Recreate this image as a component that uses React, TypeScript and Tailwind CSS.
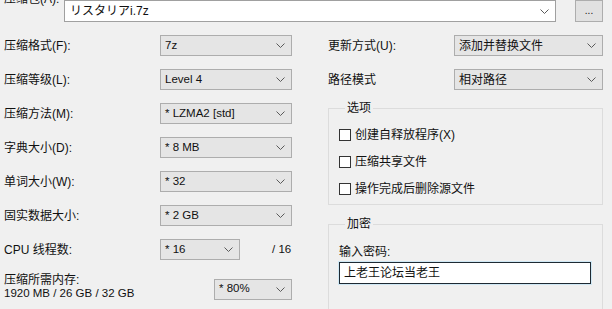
import React from "react";

function Chevron() {
  return (
    <svg width="9" height="5" viewBox="0 0 9 5" className="shrink-0">
      <path d="M0.5 0.5 L4.5 4.5 L8.5 0.5" fill="none" stroke="#5a5a5a" strokeWidth="1" />
    </svg>
  );
}

function Combo({ value, className = "" }: { value: string; className?: string }) {
  return (
    <div
      className={`flex h-[21px] items-center justify-between border border-[#adadad] bg-[#e5e5e5] pl-[4px] pr-[6px] text-[11.5px] ${className}`}
    >
      <span className="whitespace-nowrap">{value}</span>
      <Chevron />
    </div>
  );
}

function Row({ label, value }: { label: string; value: string }) {
  return (
    <div className="flex h-[21px] items-center">
      <span className="w-[156px] whitespace-nowrap">{label}</span>
      <Combo value={value} className="w-[132px]" />
    </div>
  );
}

function Check({ label }: { label: string }) {
  return (
    <div className="flex h-[16px] items-center gap-[4px]">
      <span className="h-[12px] w-[12px] border border-[#333333] bg-white" />
      <span className="whitespace-nowrap">{label}</span>
    </div>
  );
}

export default function App() {
  return (
    <div className="h-[309px] w-[612px] overflow-hidden bg-[#f0f0f0] text-[12px] leading-none text-[#111] font-['Liberation_Sans','Noto_Sans_CJK_SC',sans-serif]">
      {/* archive name */}
      <div className="flex items-start pl-[4px]">
        <span className="-mt-[7px] w-[60px] whitespace-nowrap">压缩包(A):</span>
        <div className="flex h-[22px] w-[492px] items-center justify-between border border-[#a0a0a0] bg-white pl-[5px] pr-[6px]">
          <span>リスタリアi.7z</span>
          <Chevron />
        </div>
        <div className="ml-[19px] flex h-[22px] w-[28px] items-end justify-center border border-[#adadad] bg-[#e1e1e1] pb-[5px] text-[10px]">
          ...
        </div>
      </div>

      <div className="mt-[13px] flex">
        {/* left column */}
        <div className="flex w-[328px] flex-col pl-[4px]">
          <div className="flex flex-col gap-[13px]">
            <Row label="压缩格式(F):" value="7z" />
            <Row label="压缩等级(L):" value="Level 4" />
            <Row label="压缩方法(M):" value="* LZMA2 [std]" />
            <Row label="字典大小(D):" value="* 8 MB" />
            <Row label="单词大小(W):" value="* 32" />
            <Row label="固实数据大小:" value="* 2 GB" />
            <div className="flex h-[21px] items-center">
              <span className="w-[156px] whitespace-nowrap">CPU 线程数:</span>
              <Combo value="* 16" className="w-[80px]" />
              <span className="ml-[32px] text-[11.5px]">/ 16</span>
            </div>
          </div>
          <div className="mt-[14px] flex items-end">
            <div className="flex w-[210px] flex-col gap-[2px]">
              <span className="whitespace-nowrap">压缩所需内存:</span>
              <span className="whitespace-nowrap text-[11.5px]">1920 MB / 26 GB / 32 GB</span>
            </div>
            <Combo value="* 80%" className="w-[78px]" />
          </div>
        </div>

        {/* right column */}
        <div className="flex w-[275px] flex-col">
          <div className="flex flex-col gap-[13px]">
            <div className="flex h-[21px] items-center">
              <span className="w-[126px] whitespace-nowrap">更新方式(U):</span>
              <Combo value="添加并替换文件" className="w-[149px] text-[12px]" />
            </div>
            <div className="flex h-[21px] items-center">
              <span className="w-[126px] whitespace-nowrap">路径模式</span>
              <Combo value="相对路径" className="w-[149px] text-[12px]" />
            </div>
          </div>

          <fieldset className="mt-[12px] h-[103px] border border-[#dcdcdc] pl-[10px]">
            <legend className="ml-[6px] px-[2px]">选项</legend>
            <div className="mt-[13px] flex flex-col gap-[11px]">
              <Check label="创建自释放程序(X)" />
              <Check label="压缩共享文件" />
              <Check label="操作完成后删除源文件" />
            </div>
          </fieldset>

          <fieldset className="mt-[13px] h-[100px] border border-[#dcdcdc] pl-[10px]">
            <legend className="ml-[6px] px-[2px]">加密</legend>
            <div className="mt-[16px]">输入密码:</div>
            <div className="mt-[4px] flex h-[22px] w-[252px] items-center border border-[#1e2a33] bg-white pl-[4px] shadow-[0_0_0_1px_#cfe8f5]">
              上老王论坛当老王
            </div>
          </fieldset>
        </div>
      </div>
    </div>
  );
}
